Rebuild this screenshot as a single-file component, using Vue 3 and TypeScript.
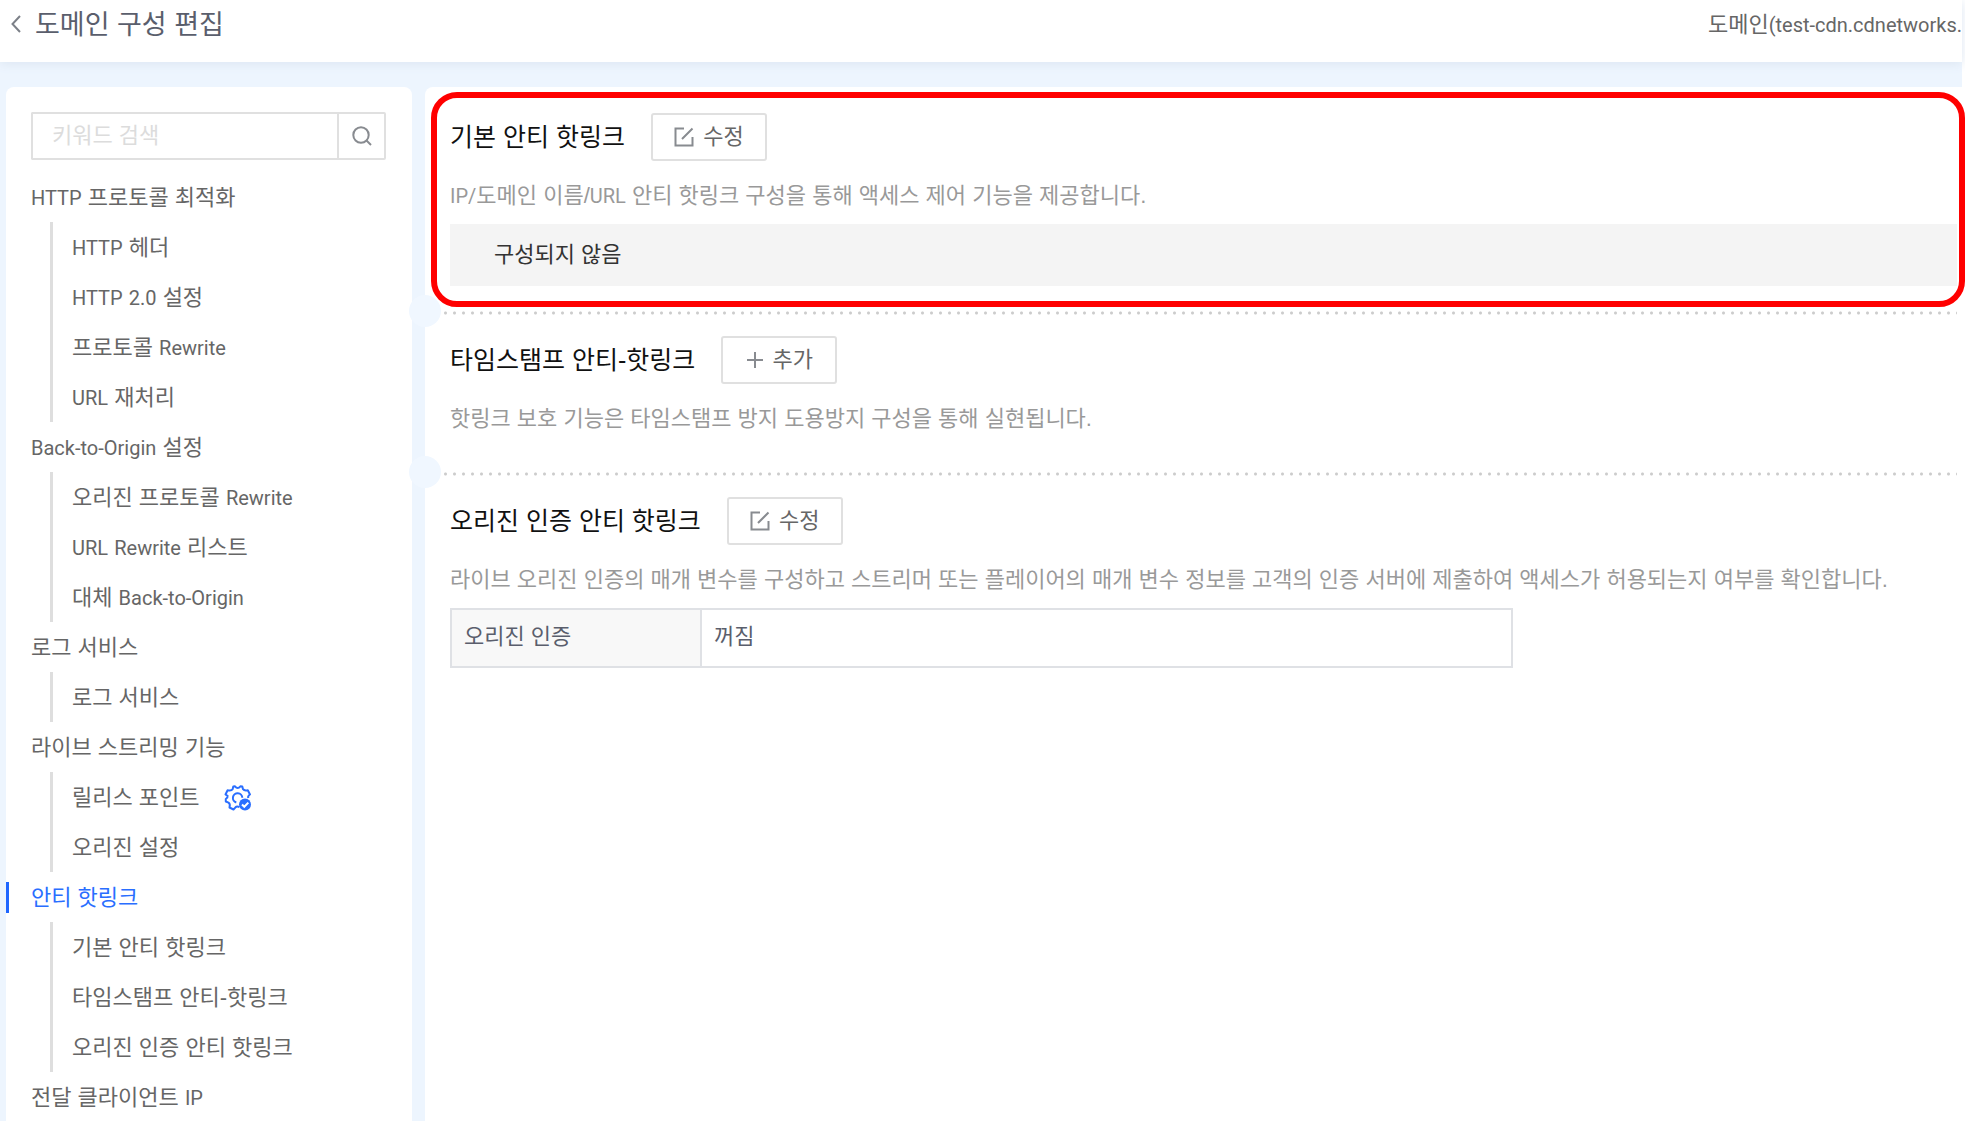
<script setup lang="ts">
import { h, ref } from 'vue'

interface NavItem {
  label: string
  configured?: boolean
}
interface NavGroup {
  label: string
  active?: boolean
  items: NavItem[]
}

const keyword = ref('')

const groups: NavGroup[] = [
  {
    label: 'HTTP 프로토콜 최적화',
    items: [
      { label: 'HTTP 헤더' },
      { label: 'HTTP 2.0 설정' },
      { label: '프로토콜 Rewrite' },
      { label: 'URL 재처리' },
    ],
  },
  {
    label: 'Back-to-Origin 설정',
    items: [
      { label: '오리진 프로토콜 Rewrite' },
      { label: 'URL Rewrite 리스트' },
      { label: '대체 Back-to-Origin' },
    ],
  },
  { label: '로그 서비스', items: [{ label: '로그 서비스' }] },
  {
    label: '라이브 스트리밍 기능',
    items: [{ label: '릴리스 포인트', configured: true }, { label: '오리진 설정' }],
  },
  {
    label: '안티 핫링크',
    active: true,
    items: [
      { label: '기본 안티 핫링크' },
      { label: '타임스탬프 안티-핫링크' },
      { label: '오리진 인증 안티 핫링크' },
    ],
  },
  { label: '전달 클라이언트 IP', items: [] },
]

// Latin runs are set a little smaller than Hangul so both look the same size.
const MixedText = (props: { text: string }) =>
  h(
    'span',
    props.text
      .split(/([A-Za-z0-9(][A-Za-z0-9().\-/]*)/)
      .filter(Boolean)
      .map((part) => (/^[A-Za-z0-9(]/.test(part) ? h('span', { class: 'latin' }, part) : part)),
  )
MixedText.props = ['text']
</script>

<template>
  <div class="page">
    <header class="topbar">
      <a class="back" href="#" aria-label="뒤로">
        <svg width="10" height="18" viewBox="0 0 10 18"><path d="M9 1 1.500 9 9 17" /></svg>
      </a>
      <h1>도메인 구성 편집</h1>
      <MixedText class="domain" text="도메인(test-cdn.cdnetworks." />
    </header>

    <div class="columns">
      <aside class="sidebar">
        <form class="search" role="search" @submit.prevent>
          <input v-model="keyword" type="text" placeholder="키워드 검색" aria-label="키워드 검색" />
          <button type="submit" aria-label="검색">
            <svg width="20" height="20" viewBox="0 0 20 20">
              <circle cx="9" cy="9" r="7.700" />
              <path d="m14.500 14.500 4.500 4.500" />
            </svg>
          </button>
        </form>

        <nav>
          <div v-for="group in groups" :key="group.label">
            <a href="#" class="group" :class="{ active: group.active }"><MixedText :text="group.label" /></a>
            <ul v-if="group.items.length">
              <li v-for="item in group.items" :key="item.label">
                <a href="#"><MixedText :text="item.label" /></a>
                <svg v-if="item.configured" class="gear" width="28" height="26" viewBox="0 0 28 26">
                  <path
                    class="gear-line"
                    d="M15.500 22.200Q13 20.800 11.500 22.300L9.500 24.500 5.500 22.500Q6.500 18.800 4.500 17.600L1.800 16.500V14Q4 12.500 3.600 10.800L1.500 9.500 3.600 5.200Q7.500 6 8.600 4.200L9.300 1.500 11 1.300Q13.700 4.600 16.400 1.300L18.300 1.500 19 4.200Q20.300 6 23.800 5.200L26 9.500Q23.500 11 24.300 13"
                  />
                  <path class="gear-line" d="M12.300 17.500A4.700 4.700 0 1 1 18.300 12.800" />
                  <circle class="gear-badge" cx="21" cy="19.500" r="6" />
                  <path class="gear-check" d="m18 19.500 2.300 2.300 4-4.200" />
                </svg>
              </li>
            </ul>
          </div>
        </nav>
      </aside>

      <main>
        <section class="highlighted">
          <div class="heading">
            <h2>기본 안티 핫링크</h2>
            <button type="button">
              <svg width="20" height="20" viewBox="0 0 20 20">
                <path d="M10 1.500H1.500v17h17V10M8 12 18.500 1.500" />
              </svg>
              수정
            </button>
          </div>
          <p class="description"><MixedText text="IP/도메인 이름/URL 안티 핫링크 구성을 통해 액세스 제어 기능을 제공합니다." /></p>
          <div class="empty">구성되지 않음</div>
        </section>

        <div class="divider"></div>

        <section>
          <div class="heading">
            <h2>타임스탬프 안티-핫링크</h2>
            <button type="button">
              <svg width="18" height="18" viewBox="0 0 18 18"><path d="M9 1v16M1 9h16" /></svg>
              추가
            </button>
          </div>
          <p class="description">핫링크 보호 기능은 타임스탬프 방지 도용방지 구성을 통해 실현됩니다.</p>
        </section>

        <div class="divider"></div>

        <section>
          <div class="heading">
            <h2>오리진 인증 안티 핫링크</h2>
            <button type="button">
              <svg width="20" height="20" viewBox="0 0 20 20">
                <path d="M10 1.500H1.500v17h17V10M8 12 18.500 1.500" />
              </svg>
              수정
            </button>
          </div>
          <p class="description">
            라이브 오리진 인증의 매개 변수를 구성하고 스트리머 또는 플레이어의 매개 변수 정보를 고객의 인증 서버에 제출하여 액세스가 허용되는지 여부를 확인합니다.
          </p>
          <table>
            <tbody>
              <tr>
                <th scope="row">오리진 인증</th>
                <td>꺼짐</td>
              </tr>
            </tbody>
          </table>
        </section>
      </main>
    </div>
  </div>
</template>

<style>
body {
  margin: 0;
  background: #fff;
}

.latin {
  font-family: Roboto, sans-serif;
  font-size: 20px;
}
</style>

<style scoped>
.page {
  display: flex;
  flex-direction: column;
  height: 100vh;
  overflow: hidden;
  box-sizing: border-box;
  padding-right: 3px;
  font-family: 'Liberation Sans', 'Noto Sans CJK KR', sans-serif;
  font-size: 22px;
  line-height: 26px;
  color: #666;
}

.page * {
  box-sizing: border-box;
}

a {
  color: inherit;
  text-decoration: none;
}

svg {
  flex: none;
  fill: none;
  stroke: currentColor;
  stroke-width: 2px;
}

input,
button {
  font: inherit;
  color: inherit;
  background: #fff;
  border: 2px solid #e0e0e0;
}

button svg {
  color: #888b90;
}

.topbar {
  position: relative;
  flex: none;
  display: flex;
  align-items: center;
  height: 62px;
  padding: 0 0 12px 11px;
  background: #fff;
  box-shadow: 0 2px 10px #dde6f2;
}

.back {
  display: flex;
  width: 24px;
  padding-bottom: 2px;
  color: #7c8088;
}

h1 {
  margin: 0;
  font-size: 27px;
  font-weight: 400;
  line-height: 46px;
  color: #5a5e6c;
}

.domain {
  margin-left: auto;
  white-space: nowrap;
}

.columns {
  flex: 1;
  display: flex;
  gap: 13px;
  padding: 25px 0 0 6px;
  background: #edf5fe;
}

.sidebar {
  flex: none;
  width: 406px;
  padding: 25px 26px 0 25px;
  background: #fff;
  border-radius: 8px 8px 0 0;
}

.search {
  display: flex;
  height: 48px;
  margin-bottom: 12px;
}

.search input {
  flex: 1;
  min-width: 0;
  padding: 0 19px;
  border-right: 0;
  border-radius: 2px 0 0 2px;
  outline: 0;
}

.search input::placeholder {
  color: #dcdcdc;
  opacity: 1;
}

.search button {
  display: flex;
  align-items: center;
  justify-content: center;
  width: 49px;
  padding: 0;
  border-radius: 0 2px 2px 0;
}

.group,
li {
  display: flex;
  align-items: center;
  height: 50px;
  padding-top: 2px;
  white-space: nowrap;
}

.group.active {
  position: relative;
  color: #2a6eff;
}

.group.active::before {
  content: '';
  position: absolute;
  left: -25px;
  top: 10px;
  width: 3px;
  height: 31px;
  background: #1f66ff;
}

ul {
  margin: 0 0 0 19px;
  padding: 0 0 0 19px;
  list-style: none;
  border-left: 3px solid #dedede;
}

.gear {
  margin-left: 24px;
  color: #2a6eff;
}

.gear-line {
  stroke-linejoin: round;
}

.gear-badge {
  fill: #2a6eff;
  stroke: none;
}

.gear-check {
  stroke: #fff;
}

main {
  flex: 1;
  min-width: 0;
  padding: 26px 5px 0 25px;
  background: #fff;
  border-radius: 8px 0 0 0;
}

.heading {
  display: flex;
  align-items: center;
  gap: 26px;
  margin-bottom: 5px;
}

h2 {
  margin: 0;
  font-size: 25px;
  font-weight: 400;
  line-height: 46px;
  color: #111;
}

.heading button {
  display: flex;
  align-items: center;
  justify-content: center;
  gap: 9px;
  width: 116px;
  height: 48px;
  padding: 0;
  border-radius: 3px;
}

.description {
  margin: 0;
  padding-top: 2px;
  line-height: 56px;
  white-space: nowrap;
  color: #999;
}

.empty {
  padding-left: 44px;
  line-height: 62px;
  color: #333;
  background: #f4f4f4;
}

.highlighted {
  position: relative;
  z-index: 1;
}

.highlighted::after {
  content: '';
  position: absolute;
  inset: -21px -8px -21px -19px;
  border: 6px solid #f00;
  border-radius: 26px;
  pointer-events: none;
}

.divider {
  position: relative;
  height: 4px;
  margin: 25px 0 21px -9px;
  background: radial-gradient(circle, #ccc 1px, transparent 2px) 0 0 / 9px 4px;
}

.divider::before {
  content: '';
  position: absolute;
  left: -32px;
  top: -16px;
  width: 32px;
  height: 32px;
  border-radius: 50%;
  background: #f0f7ff;
}

table {
  width: 1063px;
  max-width: 100%;
  border-collapse: collapse;
  table-layout: fixed;
  color: #5a5e6c;
}

th,
td {
  height: 58px;
  padding: 0 12px 2px;
  border: 2px solid #dfe1e5;
  font-weight: 400;
  text-align: left;
}

th {
  width: 250px;
  background: #f8f8f8;
}
</style>
